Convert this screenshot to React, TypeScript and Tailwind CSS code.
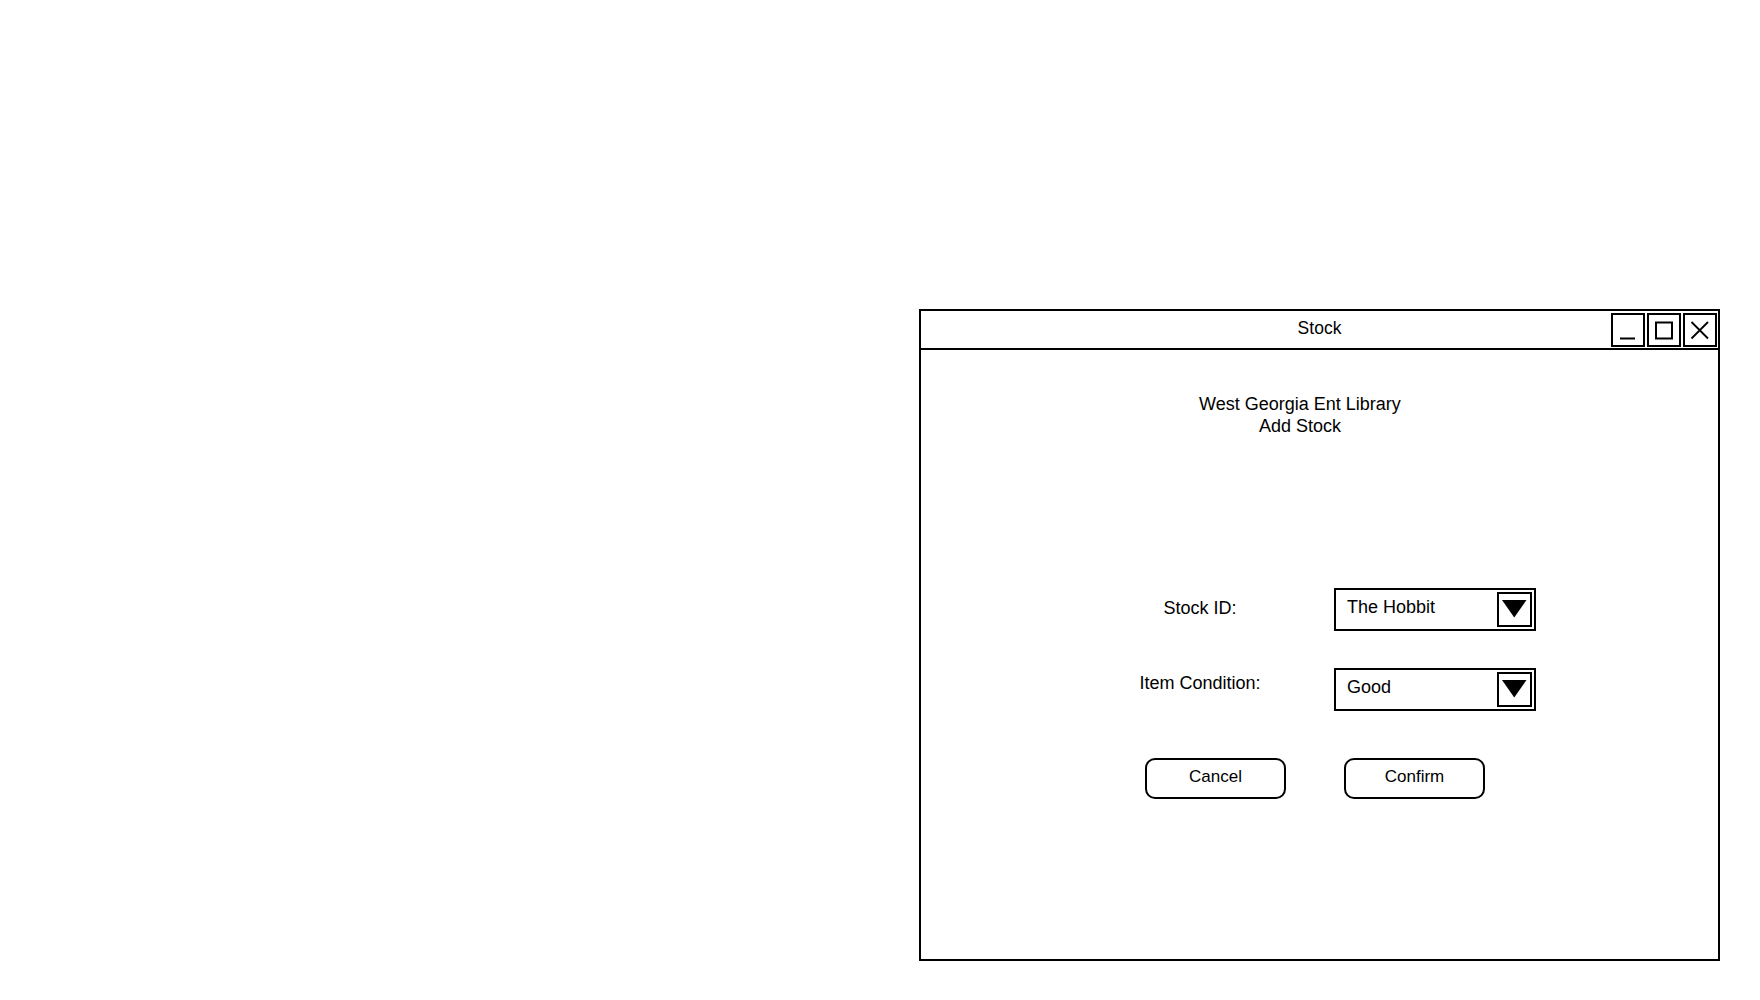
import React from "react";

function Dropdown({ value }: { value: string }) {
  return (
    <div className="w-[202px] h-[43px] border-2 border-black flex">
      <div className="flex-1 pl-[11px] pt-[6px] text-[18px] leading-[22px]">{value}</div>
      <div className="w-[35px] h-[35px] my-[2px] mr-[2px] border-2 border-black flex">
        <svg width="31" height="31" viewBox="0 0 31 31">
          <polygon points="3,6 27.5,6 15.25,23.5" fill="black" />
        </svg>
      </div>
    </div>
  );
}

function WinBtn({ children }: { children: React.ReactNode }) {
  return (
    <div className="w-[34px] h-[34px] border-2 border-black flex">
      <svg width="30" height="30" viewBox="0 0 30 30">
        {children}
      </svg>
    </div>
  );
}

export default function App() {
  return (
    <div
      className="min-h-screen w-full bg-white text-black pt-[309px] pl-[919px]"
      style={{ fontFamily: '"Liberation Sans", Arial, sans-serif' }}
    >
      <div className="w-[801px] h-[652px] border-2 border-black flex flex-col">
        {/* Title bar */}
        <div className="h-[39px] border-b-2 border-black grid grid-cols-[1fr_auto_1fr]">
          <div />
          <div className="pt-[6px] text-[17.5px] leading-[22px]">Stock</div>
          <div className="flex items-center justify-end gap-[2px] pr-[1px]">
            <WinBtn>
              <line x1="7" y1="23.5" x2="22" y2="23.5" stroke="black" strokeWidth="2" />
            </WinBtn>
            <WinBtn>
              <rect x="7" y="7.5" width="16" height="16" fill="none" stroke="black" strokeWidth="2" />
            </WinBtn>
            <WinBtn>
              <path d="M6.5 7 L23 23.5 M23 7 L6.5 23.5" stroke="black" strokeWidth="1.8" fill="none" />
            </WinBtn>
          </div>
        </div>

        {/* Body */}
        <div className="flex flex-col">
          <div className="mt-[43px] pr-[39px] text-center text-[18px] leading-[22px]">
            <div>West Georgia Ent Library</div>
            <div>Add Stock</div>
          </div>

          <div className="mt-[151px] ml-[219px] flex items-start">
            <div className="w-[120px] pt-[9px] text-center text-[18px] leading-[22px]">Stock ID:</div>
            <div className="ml-[74px]">
              <Dropdown value="The Hobbit" />
            </div>
          </div>

          <div className="mt-[37px] ml-[219px] flex items-start">
            <div className="w-[120px] pt-[4px] text-center text-[18px] leading-[22px] whitespace-nowrap flex justify-center">
              Item Condition:
            </div>
            <div className="ml-[74px]">
              <Dropdown value="Good" />
            </div>
          </div>

          <div className="mt-[47px] ml-[224px] flex gap-[58px]">
            <div className="w-[141px] h-[41px] border-2 border-black rounded-[10px] flex justify-center pt-[6px] text-[17px] leading-[22px]">
              Cancel
            </div>
            <div className="w-[141px] h-[41px] border-2 border-black rounded-[10px] flex justify-center pt-[6px] text-[17px] leading-[22px]">
              Confirm
            </div>
          </div>
        </div>
      </div>
    </div>
  );
}
